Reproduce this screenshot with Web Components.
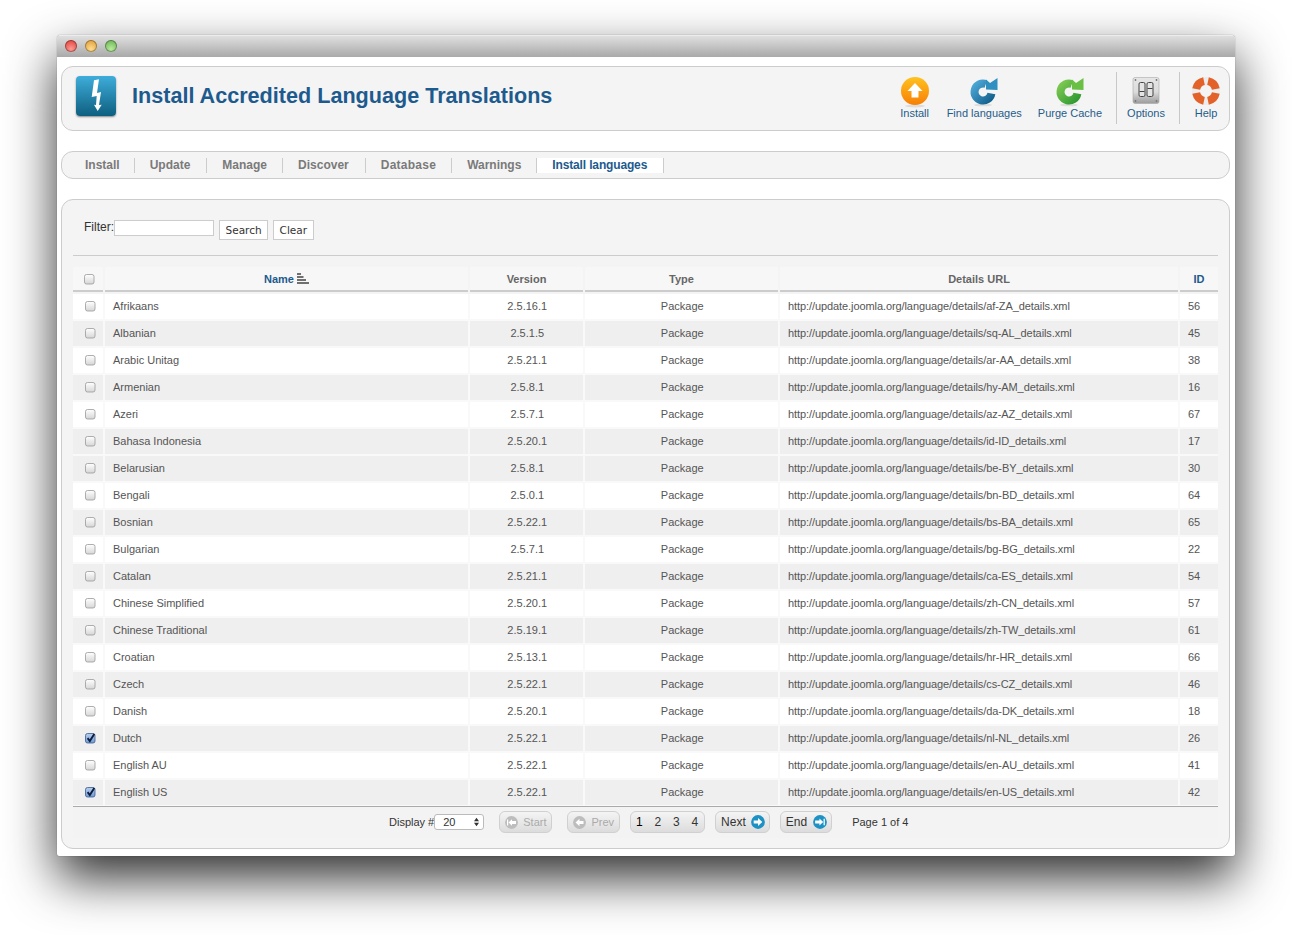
<!DOCTYPE html>
<html>
<head>
<meta charset="utf-8">
<title>Install Accredited Language Translations</title>
<style>
    html, body { margin: 0; height: 100%; overflow: hidden; background: #fff; }
    body { padding: 35px 0 0 57px; box-sizing: border-box; font-family: "Liberation Sans", Arial, sans-serif; }
</style>
</head>
<body>
<mac-window>
    <page-header title="Install Accredited Language Translations">
        <tool-button label="Install" icon="install"></tool-button>
        <tool-button label="Find languages" icon="find"></tool-button>
        <tool-button label="Purge Cache" icon="purge"></tool-button>
        <tool-divider></tool-divider>
        <tool-button label="Options" icon="options"></tool-button>
        <tool-divider></tool-divider>
        <tool-button label="Help" icon="help"></tool-button>
    </page-header>
    <sub-nav items="Install,Update,Manage,Discover,Database,Warnings,Install languages" active="Install languages"></sub-nav>
    <content-panel>
        <filter-bar></filter-bar>
        <lang-table id="languages"></lang-table>
    </content-panel>
</mac-window>

<script>
const ICONS = {
    install: `<svg width="32" height="32" viewBox="0 0 32 32">
        <defs><linearGradient id="o" x1="0" y1="0" x2="0" y2="1"><stop offset="0" stop-color="#ffc21f"/><stop offset="1" stop-color="#f77f05"/></linearGradient></defs>
        <ellipse cx="16" cy="30" rx="10" ry="1.5" fill="#ddd"/>
        <circle cx="16" cy="15" r="14" fill="url(#o)"/>
        <path d="M16 7 L23.5 15 H19.5 V21.5 H12.5 V15 H8.5 Z" fill="#fff"/>
    </svg>`,
    find: `<svg width="32" height="32" viewBox="0 0 32 32">
        <defs><linearGradient id="b" x1="0" y1="0" x2="1" y2="1"><stop offset="0" stop-color="#4ba6d4"/><stop offset="1" stop-color="#14618f"/></linearGradient></defs>
        <ellipse cx="15" cy="29" rx="9" ry="1.3" fill="#ddd"/>
        <path d="M23.4 17.5 A 8.5 8.5 0 1 1 17.9 8" fill="none" stroke="url(#b)" stroke-width="8"/>
        <path d="M18 3.5 L22 7 L29.5 2 L29.5 14 L18 13.5 Z" fill="#2f8fc0"/>
    </svg>`,
    purge: `<svg width="32" height="32" viewBox="0 0 32 32">
        <defs><linearGradient id="g" x1="0" y1="0" x2="1" y2="1"><stop offset="0" stop-color="#7cc850"/><stop offset="1" stop-color="#2f9a32"/></linearGradient></defs>
        <ellipse cx="15" cy="29" rx="9" ry="1.3" fill="#ddd"/>
        <path d="M23.4 17.5 A 8.5 8.5 0 1 1 17.9 8" fill="none" stroke="url(#g)" stroke-width="8"/>
        <path d="M18 3.5 L22 7 L29.5 2 L29.5 14 L18 13.5 Z" fill="#6abf45"/>
    </svg>`,
    options: `<svg width="32" height="32" viewBox="0 0 32 32">
        <defs><linearGradient id="m" x1="0" y1="0" x2="0" y2="1"><stop offset="0" stop-color="#e6e6e6"/><stop offset=".55" stop-color="#dcdcdc"/><stop offset="1" stop-color="#9b9b9b"/></linearGradient></defs>
        <rect x="3" y="1.5" width="26" height="26" rx="2" fill="url(#m)" stroke="#aaa" stroke-width=".6"/>
        <rect x="9" y="6.5" width="6" height="14" rx="1.5" fill="#e4e4e4" stroke="#444" stroke-width="1"/>
        <rect x="17" y="6.5" width="6" height="14" rx="1.5" fill="#e4e4e4" stroke="#444" stroke-width="1"/>
        <path d="M9.5 15.5 H14.5 M17.5 12.5 H22.5" stroke="#444"/>
        <g fill="#777"><circle cx="5.5" cy="4" r=".9"/><circle cx="26.5" cy="4" r=".9"/><circle cx="5.5" cy="25" r=".9"/><circle cx="26.5" cy="25" r=".9"/></g>
    </svg>`,
    help: `<svg width="32" height="32" viewBox="0 0 32 32">
        <circle cx="16" cy="15" r="10" fill="none" stroke="#ececec" stroke-width="8"/>
        <circle cx="16" cy="15" r="10" fill="none" stroke="#e2622a" stroke-width="8" pathLength="360" stroke-dasharray="66 24" stroke-dashoffset="-12"/>
    </svg>`
};

function pagerArrow(kind, on) {
    const fill = on ? '#1b91c4' : '#bdbdbd';
    const size = on ? 14 : 13;
    const arrows = {
        start: 'M3.5 6.5 L7 3.2 V5 H11 V8 H7 V9.8 Z M2 3.5 H3.2 V9.5 H2 Z',
        prev: 'M2.5 6.5 L6.5 2.8 V5 H10.5 V8 H6.5 V10.2 Z',
        next: 'M10.5 6.5 L6.5 2.8 V5 H2.5 V8 H6.5 V10.2 Z',
        end: 'M9.5 6.5 L6 3.2 V5 H2 V8 H6 V9.8 Z M9.8 3.5 H11 V9.5 H9.8 Z'
    };
    return `<svg width="${size}" height="${size}" viewBox="0 0 13 13"><circle cx="6.5" cy="6.5" r="6.4" fill="${fill}"/><path d="${arrows[kind]}" fill="#fff"/></svg>`;
}

class MacWindow extends HTMLElement {
    constructor() {
        super();
        this.attachShadow({ mode: 'open' });
        this.shadowRoot.innerHTML = `
            <style>
                :host {
                    display: block;
                    width: 1178px;
                    height: 821px;
                    background: #fff;
                    border-radius: 4px 4px 2px 2px;
                    box-shadow: 0 22px 50px rgba(0, 0, 0, 0.82), 0 0 1px #666;
                    overflow: hidden;
                }
                .bar {
                    height: 22px;
                    box-sizing: border-box;
                    padding: 4px 0 0 8px;
                    display: flex;
                    gap: 8px;
                    background: linear-gradient(#dfdfdf, #a9a9a9);
                    border-top: 1px solid #ececec;
                }
                .dot { width: 12px; height: 12px; border-radius: 50%; box-shadow: inset 0 0 0 1px rgba(0, 0, 0, 0.3); }
                .red { background: radial-gradient(circle at 50% 75%, #ff9a94, #d8342c); }
                .amber { background: radial-gradient(circle at 50% 75%, #ffdd90, #d9932a); }
                .green { background: radial-gradient(circle at 50% 75%, #b8ec9c, #5fa94a); }
                .body { padding: 9px 5px 0 4px; display: flex; flex-direction: column; }
            </style>
            <div class="bar"><span class="dot red"></span><span class="dot amber"></span><span class="dot green"></span></div>
            <div class="body"><slot></slot></div>
        `;
    }
}

class PageHeader extends HTMLElement {
    constructor() {
        super();
        this.attachShadow({ mode: 'open' });
        this.shadowRoot.innerHTML = `
            <style>
                :host {
                    display: flex;
                    align-items: center;
                    height: 65px;
                    box-sizing: border-box;
                    background: #f4f4f4;
                    border: 1px solid #ccc;
                    border-radius: 12px;
                    padding: 0 0 5px 14px;
                }
                .logo {
                    width: 40px;
                    height: 40px;
                    border-radius: 4px;
                    margin-right: 16px;
                    background: linear-gradient(#3eaddb, #0e5f7f);
                    box-shadow: 0 1px 2px rgba(0, 0, 0, 0.45);
                }
                h1 {
                    margin: 0;
                    flex: 1;
                    font: bold 21.6px "Liberation Sans", Arial, sans-serif;
                    color: #1d5a8e;
                }
                .tools { display: flex; align-items: stretch; height: 52px; padding-right: 7px; align-self: flex-start; margin-top: 5px; }
            </style>
            <svg class="logo" viewBox="0 0 40 40"><path d="M18 4.3 L23 3.3 L21 17 L25 16 L23 29 L25.7 28.7 L21.7 35 L18 28.7 L20 29 L20.7 20 L15.7 21 Z" fill="#fff"/></svg>
            <h1></h1>
            <div class="tools"><slot></slot></div>
        `;
        this.shadowRoot.querySelector('h1').textContent = this.getAttribute('title');
    }
}

class ToolButton extends HTMLElement {
    constructor() {
        super();
        this.attachShadow({ mode: 'open' });
        this.shadowRoot.innerHTML = `
            <style>
                :host {
                    display: flex;
                    flex-direction: column;
                    align-items: center;
                    margin-left: 16px;
                    font: 11px "Liberation Sans", Arial, sans-serif;
                    color: #1f5c8a;
                }
                .icon { height: 32px; margin-top: 4px; }
                span { line-height: 14px; margin-top: -2px; white-space: nowrap; }
            </style>
            <div class="icon">${ICONS[this.getAttribute('icon')]}</div>
            <span>${this.getAttribute('label')}</span>
        `;
    }
}

class ToolDivider extends HTMLElement {
    constructor() {
        super();
        this.attachShadow({ mode: 'open' });
        this.shadowRoot.innerHTML = `
            <style>
                :host { display: block; width: 1px; background: #c8c8c8; margin: 0 -6px 0 14px; }
            </style>
        `;
    }
}

class SubNav extends HTMLElement {
    constructor() {
        super();
        this.attachShadow({ mode: 'open' });
        this.shadowRoot.innerHTML = `
            <style>
                :host {
                    display: flex;
                    align-items: center;
                    height: 28px;
                    box-sizing: border-box;
                    margin-top: 20px;
                    padding-left: 8px;
                    background: #f4f4f4;
                    border: 1px solid #ccc;
                    border-radius: 12px;
                    font: bold 12px "Liberation Sans", Arial, sans-serif;
                    color: #7a7a7a;
                }
                a {
                    line-height: 15px;
                    padding: 0 15px;
                    border-right: 1px solid #ccc;
                }
                a:nth-of-type(1) { padding-right: 14px; }
                a:nth-of-type(2), a:nth-of-type(4) { padding-right: 16px; }
                a:nth-of-type(5) { letter-spacing: 0.25px; }
                a.active { background: #fff; color: #1d5a8e; letter-spacing: -0.15px; padding-right: 16px; }
            </style>
        `;
        const active = this.getAttribute('active');
        for (const item of this.getAttribute('items').split(',')) {
            const link = document.createElement('a');
            link.textContent = item;
            if (item === active) link.className = 'active';
            this.shadowRoot.appendChild(link);
        }
    }
}

class ContentPanel extends HTMLElement {
    constructor() {
        super();
        this.attachShadow({ mode: 'open' });
        this.shadowRoot.innerHTML = `
            <style>
                :host {
                    display: block;
                    height: 650px;
                    box-sizing: border-box;
                    margin-top: 20px;
                    padding: 20px 11px 0;
                    background: #f4f4f4;
                    border: 1px solid #ccc;
                    border-radius: 12px;
                }
            </style>
            <slot></slot>
        `;
    }
}

class FilterBar extends HTMLElement {
    constructor() {
        super();
        this.attachShadow({ mode: 'open' });
        this.shadowRoot.innerHTML = `
            <style>
                :host {
                    display: flex;
                    align-items: flex-start;
                    height: 35px;
                    padding-left: 11px;
                    border-bottom: 1px solid #ccc;
                    font: 12px "Liberation Sans", Arial, sans-serif;
                    color: #333;
                }
                label { line-height: 14px; width: 30px; white-space: nowrap; }
                .field { width: 98px; height: 14px; background: #fff; border: 1px solid #ccc; margin-right: 5px; }
                .btn {
                    height: 18px;
                    padding: 0 5.5px;
                    margin-right: 5px;
                    background: #fff;
                    border: 1px solid #ccc;
                    font: 10.5px/19px "DejaVu Sans", sans-serif;
                    color: #333;
                }
            </style>
            <label>Filter:</label>
            <div class="field"></div>
            <div class="btn">Search</div>
            <div class="btn">Clear</div>
        `;
    }
}

class TickBox extends HTMLElement {
    constructor() {
        super();
        this.attachShadow({ mode: 'open' });
        const checked = this.hasAttribute('checked');
        this.shadowRoot.innerHTML = `
            <style>
                :host { display: block; width: 11px; height: 11px; }
                svg { display: block; }
            </style>
            <svg width="11" height="11" viewBox="0 0 11 11">
                <defs><linearGradient id="t" x1="0" y1="0" x2="0" y2="1">
                    <stop offset="0" stop-color="${checked ? '#b9cfec' : '#fff'}"/>
                    <stop offset="1" stop-color="${checked ? '#6f9bd6' : '#d6d6d6'}"/>
                </linearGradient></defs>
                <rect x=".5" y=".5" width="9.5" height="9.5" rx="2" fill="url(#t)" stroke="${checked ? '#3a5a90' : '#999'}" stroke-width=".8"/>
                ${checked ? '<path d="M2.6 5.2 L4.8 8 L9.3 .9" fill="none" stroke="#0d1d40" stroke-width="1.9"/>' : ''}
            </svg>
        `;
    }
}

const GRID_COLUMNS = '30px 363px 113px 193px 398px 38px';

class LangHead extends HTMLElement {
    constructor() {
        super();
        this.attachShadow({ mode: 'open' });
        this.shadowRoot.innerHTML = `
            <style>
                :host {
                    display: grid;
                    grid-template-columns: ${GRID_COLUMNS};
                    column-gap: 2px;
                    height: 25px;
                    box-sizing: border-box;
                    font: bold 11px "Liberation Sans", Arial, sans-serif;
                    color: #666;
                }
                div {
                    display: flex;
                    align-items: center;
                    justify-content: center;
                    gap: 3px;
                    background: #f7f7f7;
                    border-bottom: 2px solid #ccc;
                }
                .tick { padding: 1px 0 0 3px; box-sizing: border-box; }
                .sorted { color: #1d5a8e; }
            </style>
            <div class="tick"><tick-box></tick-box></div>
            <div class="sorted">Name <svg width="12" height="11" viewBox="0 0 12 11"><path d="M0 1 H4 M0 4 H6.5 M0 7 H9 M0 10 H12" stroke="#444" stroke-width="1.4"/></svg></div>
            <div>Version</div>
            <div>Type</div>
            <div>Details URL</div>
            <div class="sorted">ID</div>
        `;
    }
}

class LangRow extends HTMLElement {
    constructor() {
        super();
        this.attachShadow({ mode: 'open' });
    }

    connectedCallback() {
        const get = name => this.getAttribute(name);
        this.shadowRoot.innerHTML = `
            <style>
                :host {
                    display: grid;
                    grid-template-columns: ${GRID_COLUMNS};
                    column-gap: 2px;
                    height: 25px;
                    margin-top: 2px;
                    font: 11px "Liberation Sans", Arial, sans-serif;
                    color: #555;
                }
                div { display: flex; align-items: center; background: #fff; white-space: nowrap; padding-bottom: 1px; box-sizing: border-box; }
                :host([alt]) div { background: #efefef; }
                .box { justify-content: center; padding-left: 5px; }
                .mid { justify-content: center; padding-left: 1.5px; }
                .pad { padding-left: 8px; }
                .url { letter-spacing: -0.085px; }
            </style>
            <div class="box"><tick-box ${this.hasAttribute('checked') ? 'checked' : ''}></tick-box></div>
            <div class="pad">${get('name')}</div>
            <div class="mid">${get('version')}</div>
            <div class="mid">Package</div>
            <div class="pad url">http://update.joomla.org/language/details/${get('code')}_details.xml</div>
            <div class="pad">${get('ref')}</div>
        `;
    }
}

class PagerButton extends HTMLElement {
    constructor() {
        super();
        this.attachShadow({ mode: 'open' });
        this.shadowRoot.innerHTML = `
            <style>
                :host {
                    display: flex;
                    align-items: center;
                    gap: 5px;
                    height: 20px;
                    padding: 0 4px 0 5px;
                    background: linear-gradient(#f4f4f4, #dcdcdc);
                    border: 1px solid #d0d0d0;
                    border-radius: 6px;
                    font: 12px "Liberation Sans", Arial, sans-serif;
                    color: #333;
                }
                :host([off]) { color: #aaa; font-size: 11px; padding: 0 5px; }
            </style>
            <slot></slot>
        `;
    }
}

class PagerBar extends HTMLElement {
    constructor() {
        super();
        this.attachShadow({ mode: 'open' });
        this.shadowRoot.innerHTML = `
            <style>
                :host {
                    display: flex;
                    align-items: center;
                    height: 30px;
                    padding: 0 0 1px 316px;
                    border-top: 1px solid #aaa;
                    background: #f3f3f3;
                    font: 11px "Liberation Sans", Arial, sans-serif;
                    color: #333;
                }
                .picker {
                    width: 48px;
                    height: 14px;
                    margin-right: 15px;
                    display: flex;
                    align-items: center;
                    justify-content: space-between;
                    background: #fff;
                    border: 1px solid #bbb;
                    border-radius: 3px;
                }
                .picker span { padding-left: 8px; }
                .picker svg { margin-right: 4px; }
                pager-button { margin-right: 10px; }
                pager-button.start { margin-right: 15px; }
                pager-button.pages { gap: 0; padding: 0 6px 0 5px; justify-content: space-between; width: 62px; }
                pager-button.end { margin-right: 20px; gap: 6px; }
                b { font-weight: normal; color: #000; }
            </style>
            <span>Display #</span>
            <div class="picker"><span>20</span><svg width="5" height="10" viewBox="0 0 6 10"><path d="M3 0 L6 4 H0 Z M3 10 L0 6 H6 Z" fill="#333"/></svg></div>
            <pager-button class="start" off>${pagerArrow('start', false)} Start</pager-button>
            <pager-button off>${pagerArrow('prev', false)} Prev</pager-button>
            <pager-button class="pages"><b>1</b><span>2</span><span>3</span><span>4</span></pager-button>
            <pager-button>Next ${pagerArrow('next', true)}</pager-button>
            <pager-button class="end">End ${pagerArrow('end', true)}</pager-button>
            <span>Page 1 of 4</span>
        `;
    }
}

class LangTable extends HTMLElement {
    constructor() {
        super();
        this.attachShadow({ mode: 'open' });
        this.shadowRoot.innerHTML = `
            <style>
                :host { display: block; margin-top: 11px; }
                #rows { background: #f9f9f9; padding-bottom: 1px; }
            </style>
            <lang-head></lang-head>
            <div id="rows"></div>
            <pager-bar></pager-bar>
        `;
    }

    setLanguages(languages) {
        const rows = this.shadowRoot.getElementById('rows');
        for (const [name, version, code, ref, shaded, checked] of languages) {
            const row = document.createElement('lang-row');
            row.setAttribute('name', name);
            row.setAttribute('version', version);
            row.setAttribute('code', code);
            row.setAttribute('ref', ref);
            if (shaded) row.setAttribute('alt', '');
            if (checked) row.setAttribute('checked', '');
            rows.appendChild(row);
        }
    }
}

customElements.define('mac-window', MacWindow);
customElements.define('page-header', PageHeader);
customElements.define('tool-button', ToolButton);
customElements.define('tool-divider', ToolDivider);
customElements.define('sub-nav', SubNav);
customElements.define('content-panel', ContentPanel);
customElements.define('filter-bar', FilterBar);
customElements.define('tick-box', TickBox);
customElements.define('lang-head', LangHead);
customElements.define('lang-row', LangRow);
customElements.define('pager-button', PagerButton);
customElements.define('pager-bar', PagerBar);
customElements.define('lang-table', LangTable);

document.getElementById('languages').setLanguages([
    ['Afrikaans', '2.5.16.1', 'af-ZA', 56],
    ['Albanian', '2.5.1.5', 'sq-AL', 45, true],
    ['Arabic Unitag', '2.5.21.1', 'ar-AA', 38],
    ['Armenian', '2.5.8.1', 'hy-AM', 16, true],
    ['Azeri', '2.5.7.1', 'az-AZ', 67],
    ['Bahasa Indonesia', '2.5.20.1', 'id-ID', 17, true],
    ['Belarusian', '2.5.8.1', 'be-BY', 30, true],
    ['Bengali', '2.5.0.1', 'bn-BD', 64],
    ['Bosnian', '2.5.22.1', 'bs-BA', 65, true],
    ['Bulgarian', '2.5.7.1', 'bg-BG', 22],
    ['Catalan', '2.5.21.1', 'ca-ES', 54, true],
    ['Chinese Simplified', '2.5.20.1', 'zh-CN', 57],
    ['Chinese Traditional', '2.5.19.1', 'zh-TW', 61, true],
    ['Croatian', '2.5.13.1', 'hr-HR', 66],
    ['Czech', '2.5.22.1', 'cs-CZ', 46, true],
    ['Danish', '2.5.20.1', 'da-DK', 18],
    ['Dutch', '2.5.22.1', 'nl-NL', 26, true, true],
    ['English AU', '2.5.22.1', 'en-AU', 41],
    ['English US', '2.5.22.1', 'en-US', 42, true, true]
]);
</script>
</body>
</html>
